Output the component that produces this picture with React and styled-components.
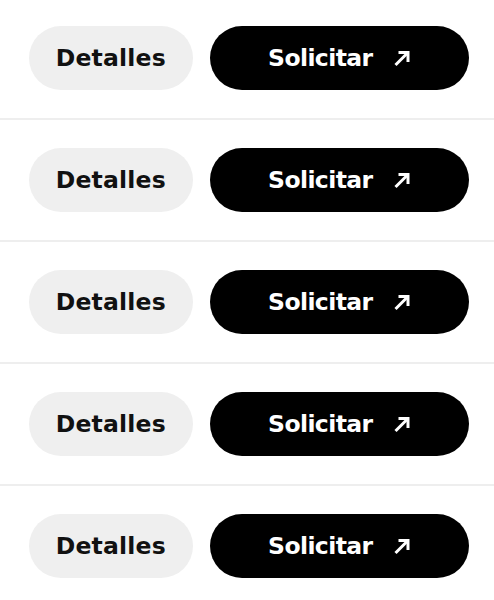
import styled, { createGlobalStyle } from "styled-components";

const GlobalStyle = createGlobalStyle`
  html, body {
    margin: 0;
    padding: 0;
    background: #ffffff;
  }

  body {
    font-family: "DejaVu Sans", "Liberation Sans", sans-serif;
    -webkit-font-smoothing: antialiased;
  }
`;

const offers = [1, 2, 3, 4, 5];

const ArrowUpRight = () => (
  <svg width="18" height="18" viewBox="0 0 18 18" fill="none" aria-hidden="true">
    <path d="M2.5 16 L15 3.5" stroke="currentColor" strokeWidth="3" />
    <path d="M5.5 3.5 H15 V13" stroke="currentColor" strokeWidth="3" />
  </svg>
);

const App = () => {
  return (
    <>
      <GlobalStyle />
      <List>
        {offers.map((id) => (
          <Row key={id}>
            <DetailsButton type="button">Detalles</DetailsButton>
            <ApplyButton type="button">
              <span>Solicitar</span>
              <ArrowUpRight />
            </ApplyButton>
          </Row>
        ))}
      </List>
    </>
  );
};

export default App;

const List = styled.div`
  display: flex;
  flex-direction: column;
  width: 494px;
  height: 600px;
  overflow: hidden;
`;

const Row = styled.div`
  display: flex;
  align-items: center;
  gap: 17px;
  flex-shrink: 0;
  padding: 28px 25px 28px 29px;
  border-top: 2px solid #eeeeee;

  &:first-child {
    padding-top: 26px;
    border-top: none;
  }
`;

const BaseButton = styled.button`
  display: flex;
  align-items: center;
  justify-content: center;
  height: 64px;
  border: none;
  border-radius: 32px;
  font-family: inherit;
  font-size: 23.5px;
  font-weight: 700;
  cursor: pointer;
`;

const DetailsButton = styled(BaseButton)`
  width: 164px;
  padding: 0;
  letter-spacing: 0.2px;
  color: #111111;
  background-color: #efefef;
`;

const ApplyButton = styled(BaseButton)`
  width: 260px;
  padding: 0;
  gap: 20px;
  letter-spacing: -0.6px;
  color: #ffffff;
  background-color: #000000;
`;
